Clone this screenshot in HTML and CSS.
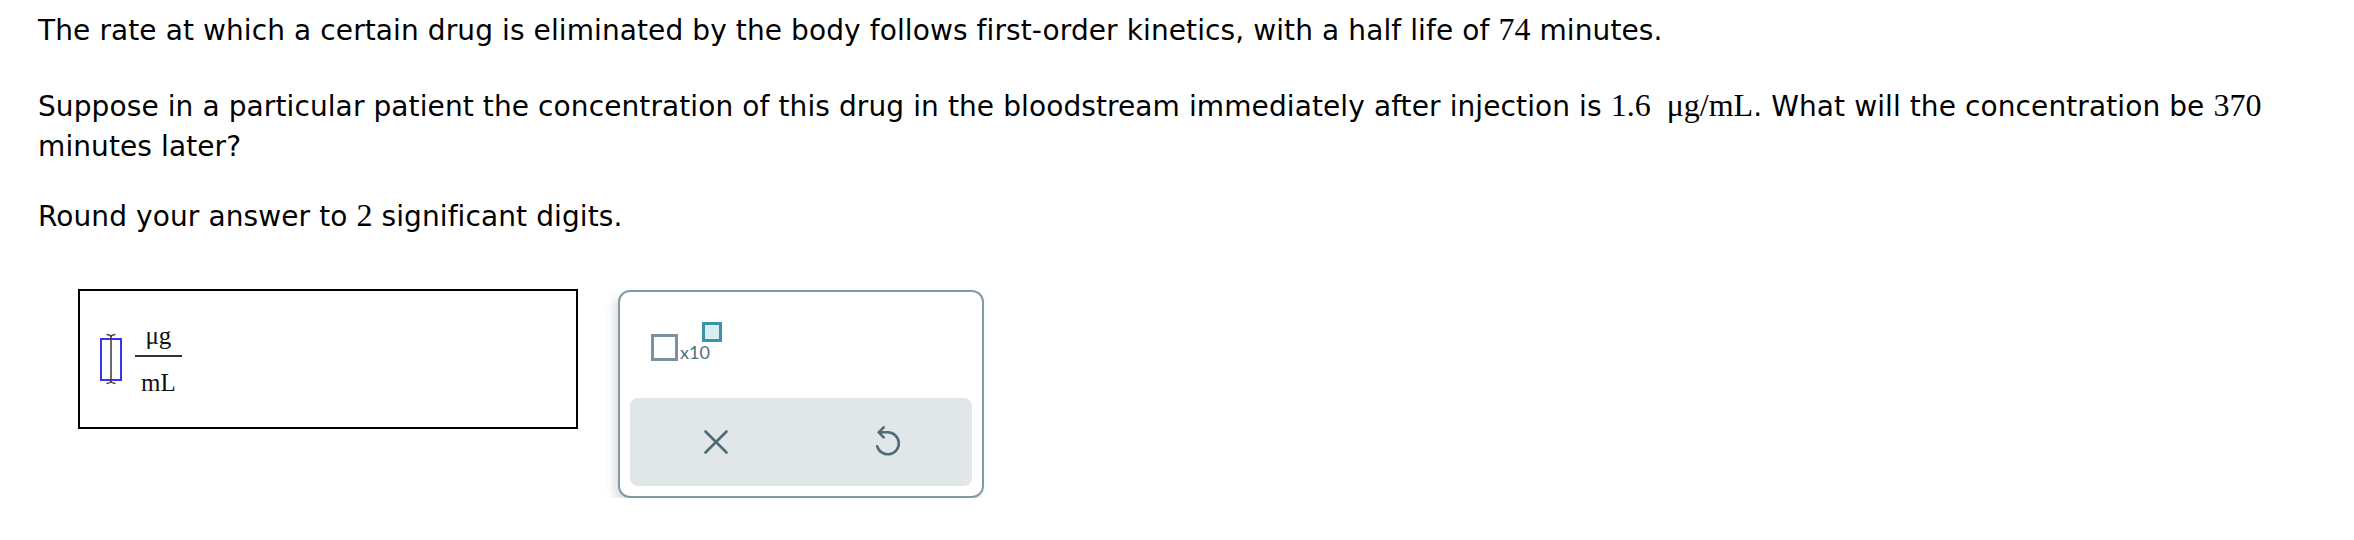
FILE: index.html
```html
<!DOCTYPE html>
<html lang="en">
<head>
<meta charset="utf-8">
<title>Drug elimination question</title>
<link rel="stylesheet" href="styles.css">
</head>
<body>
<div class="page">
  <p class="q q1">The rate at which a certain drug is eliminated by the body follows first-order kinetics, with a half life of <span class="m">74</span> minutes.</p>
  <p class="q q2">Suppose in a particular patient the concentration of this drug in the bloodstream immediately after injection is <span class="m">1.6&nbsp;&nbsp;μg/mL</span>. What will the concentration be <span class="m">370</span> minutes later?</p>
  <p class="q q3">Round your answer to <span class="m">2</span> significant digits.</p>

  <div class="answer-row">
    <div class="answer-box">
      <svg class="cursor" width="22" height="52" viewBox="0 0 22 52">
        <rect x="1" y="6" width="20" height="41" fill="none" stroke="#3434f5" stroke-width="2"/>
        <path d="M11 2 V50" stroke="#444" stroke-width="1.6" fill="none"/>
        <path d="M6.5 1.5 Q11 2 11 4 Q11 2 15.5 1.5 M6.5 50.5 Q11 50 11 48 Q11 50 15.5 50.5" stroke="#444" stroke-width="1.4" fill="none"/>
      </svg>
      <span class="frac">
        <span class="num">μg</span>
        <span class="bar"></span>
        <span class="den">mL</span>
      </span>
    </div>

    <div class="keypad">
      <div class="keys-top">
        <button class="sci" type="button" aria-label="scientific notation">
          <span class="sci-base"></span>
          <span class="sci-text">x10</span>
          <span class="sci-exp"></span>
        </button>
      </div>
      <div class="keys-bottom">
        <button class="key" type="button" aria-label="clear">
          <svg width="26" height="26" viewBox="0 0 26 26">
            <path d="M2.5 2.5 L23.5 23.5 M23.5 2.5 L2.5 23.5" stroke="#4e6b78" stroke-width="2.6" stroke-linecap="round" fill="none"/>
          </svg>
        </button>
        <button class="key" type="button" aria-label="undo">
          <svg width="32" height="32" viewBox="0 0 32 32">
            <path d="M12.7 1.3 L7.7 6.3 L12.7 11.3 M7.7 6.3 H16.8 A11 11 0 1 1 6.2 20.3" stroke="#4e6b78" stroke-width="2.6" stroke-linecap="round" stroke-linejoin="round" fill="none"/>
          </svg>
        </button>
      </div>
    </div>
  </div>
</div>
</body>
</html>
```

FILE: styles.css
```css
html, body {
  margin: 0;
  padding: 0;
  background: #ffffff;
}

body {
  font-family: "DejaVu Sans", Verdana, sans-serif;
  color: #000000;
}

.page {
  padding: 11px 38px 0 38px;
}

.q {
  margin: 0;
  font-size: 28px;
  line-height: 40px;
  letter-spacing: 0.1px;
}

.q1 {
  margin-bottom: 36px;
}

.q2 {
  margin-bottom: 30px;
}

.m {
  font-family: "Liberation Serif", "Times New Roman", serif;
  font-size: 32px;
  line-height: 1;
  letter-spacing: 0;
}

.answer-row {
  display: flex;
  align-items: flex-start;
  gap: 40px;
  margin-top: 52px;
  margin-left: 40px;
}

.answer-box {
  width: 500px;
  height: 140px;
  box-sizing: border-box;
  border: 2px solid #000000;
  display: flex;
  align-items: center;
  padding-left: 20px;
}

.cursor {
  display: block;
  flex: none;
}

.frac {
  display: inline-flex;
  flex-direction: column;
  align-items: stretch;
  margin-left: 13px;
  font-family: "Liberation Serif", "Times New Roman", serif;
  font-size: 25px;
  line-height: 28px;
  text-align: center;
  color: #111;
}

.frac .num {
  display: block;
  padding: 0 6px;
  margin-bottom: 5px;
}

.frac .bar {
  display: block;
  height: 2px;
  background: #333333;
}

.frac .den {
  display: block;
  padding: 0 6px;
  margin-top: 12px;
}

.keypad {
  margin-top: 1px;
  width: 366px;
  box-sizing: border-box;
  border: 2px solid #8599a3;
  border-radius: 12px;
  padding: 10px;
  background: #ffffff;
  box-shadow: -4px 5px 10px rgba(40, 60, 70, 0.16);
}

.keys-top {
  height: 96px;
  box-sizing: border-box;
  padding: 20px 0 0 21px;
}

.sci {
  display: inline-flex;
  align-items: flex-end;
  height: 39px;
  padding: 0;
  margin: 0;
  border: 0;
  background: transparent;
  cursor: pointer;
}

.sci-base {
  display: block;
  width: 27px;
  height: 27px;
  box-sizing: border-box;
  border: 3px solid #7b929c;
  background: #ffffff;
}

.sci-text {
  display: block;
  margin-left: 2px;
  font-family: Lato, "Open Sans", sans-serif;
  font-size: 18px;
  line-height: 17px;
  color: #51707c;
}

.sci-exp {
  display: block;
  align-self: flex-start;
  width: 20px;
  height: 20px;
  box-sizing: border-box;
  margin-left: -8px;
  border: 3px solid #3b95ab;
  background: #d6eef4;
}

.keys-bottom {
  display: flex;
  height: 88px;
  background: #e1e6e9;
  border-radius: 8px;
}

.key {
  flex: 1;
  display: flex;
  align-items: center;
  justify-content: center;
  padding: 0;
  margin: 0;
  border: 0;
  background: transparent;
  cursor: pointer;
}

.key svg {
  display: block;
  overflow: visible;
}
```
